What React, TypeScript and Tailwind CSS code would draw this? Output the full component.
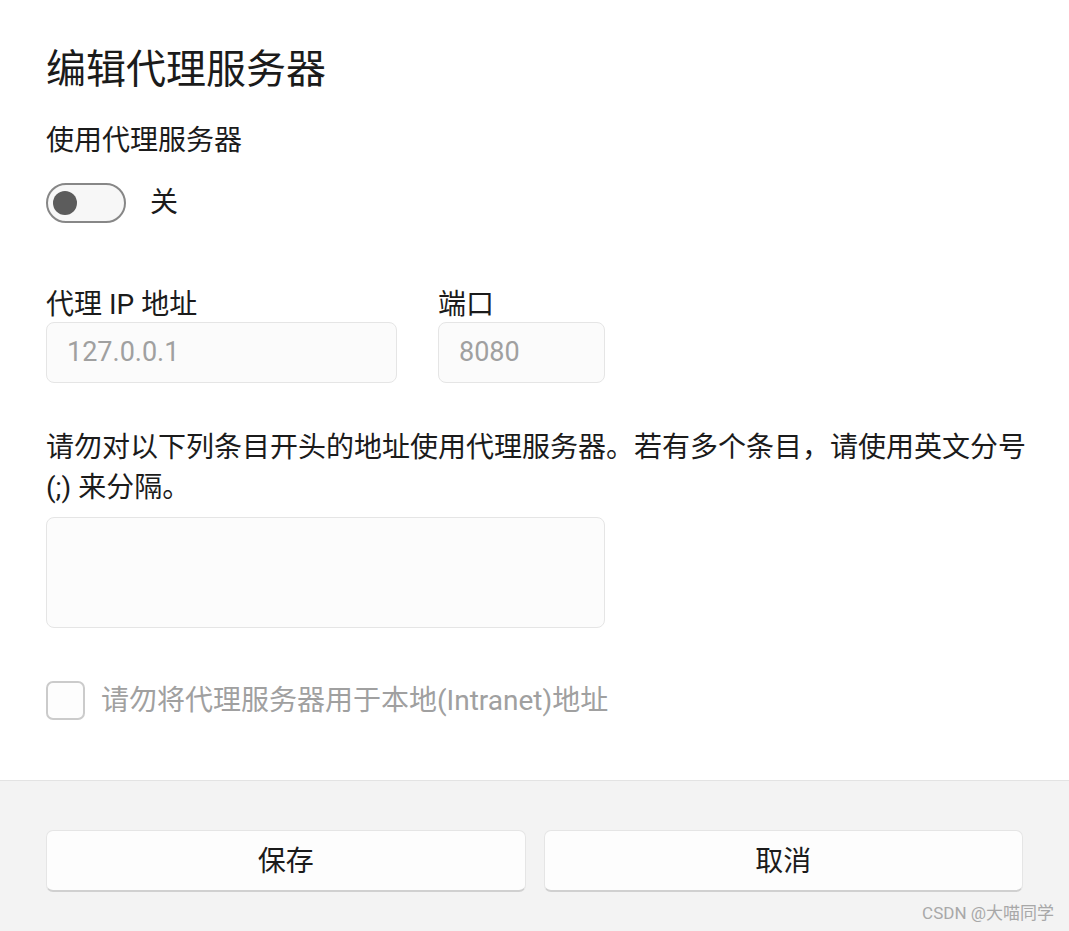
import React from "react";

const font = { fontFamily: 'Roboto, "Noto Sans CJK SC", sans-serif' };

export default function App() {
  return (
    <div
      className="relative w-[1069px] h-[931px] bg-white flex flex-col overflow-hidden text-[#1b1b1b]"
      style={font}
    >
      <div className="flex-1 flex flex-col px-[46px]">
        <div className="mt-[50px] text-[40px] leading-[40px]">编辑代理服务器</div>
        <div className="mt-[35px] text-[28px] leading-[32px]">使用代理服务器</div>
        <div className="mt-[26px] flex items-center gap-[24px]">
          <div className="w-[80px] h-[40px] rounded-full border-2 border-[#878787] bg-[#f7f7f7] flex items-center pl-[5px]">
            <div className="w-[24px] h-[24px] rounded-full bg-[#5c5c5c]" />
          </div>
          <span className="text-[28px] leading-[28px]">关</span>
        </div>

        <div className="mt-[66px] flex gap-[41px]">
          <div className="flex flex-col w-[351px]">
            <div className="text-[28px] leading-[32px]">代理 IP 地址</div>
            <div className="mt-[1px] h-[61px] rounded-[8px] border border-[#e5e5e5] bg-[#fbfbfb] flex items-center pl-[20px] text-[27px] text-[#a0a0a0]">
              127.0.0.1
            </div>
          </div>
          <div className="flex flex-col w-[167px]">
            <div className="text-[28px] leading-[32px]">端口</div>
            <div className="mt-[1px] h-[61px] rounded-[8px] border border-[#e5e5e5] bg-[#fbfbfb] flex items-center pl-[20px] text-[27px] text-[#a0a0a0]">
              8080
            </div>
          </div>
        </div>

        <div className="mt-[45px] text-[28px] leading-[40px] whitespace-nowrap">
          请勿对以下列条目开头的地址使用代理服务器。若有多个条目，请使用英文分号
          <br />
          (;) 来分隔。
        </div>
        <div className="mt-[9px] w-[559px] h-[111px] rounded-[8px] border border-[#e5e5e5] bg-[#fcfcfc]" />

        <div className="mt-[53px] flex items-center gap-[16px]">
          <div className="w-[39px] h-[39px] rounded-[7px] border-2 border-[#cbcbcb] bg-[#fdfdfd]" />
          <span className="text-[28px] leading-[28px] text-[#a0a0a0]">
            请勿将代理服务器用于本地(Intranet)地址
          </span>
        </div>
      </div>

      <div className="h-[151px] shrink-0 border-t border-[#e3e3e3] bg-[#f3f3f3] px-[46px] pt-[49px] flex gap-[18px]">
        <button className="w-[480px] h-[62px] pt-[3px] rounded-[7px] border border-[#e5e5e5] border-b-2 border-b-[#d0d0d0] bg-[#fdfdfd] text-[28px] text-[#1b1b1b]">
          保存
        </button>
        <button className="w-[480px] h-[62px] pt-[3px] rounded-[7px] border border-[#e5e5e5] border-b-2 border-b-[#d0d0d0] bg-[#fdfdfd] text-[28px] text-[#1b1b1b]">
          取消
        </button>
      </div>

      <div className="absolute right-[15px] bottom-[8px] text-[17px] leading-[20px] text-[#a8a8a8]">
        CSDN @大喵同学
      </div>
    </div>
  );
}
